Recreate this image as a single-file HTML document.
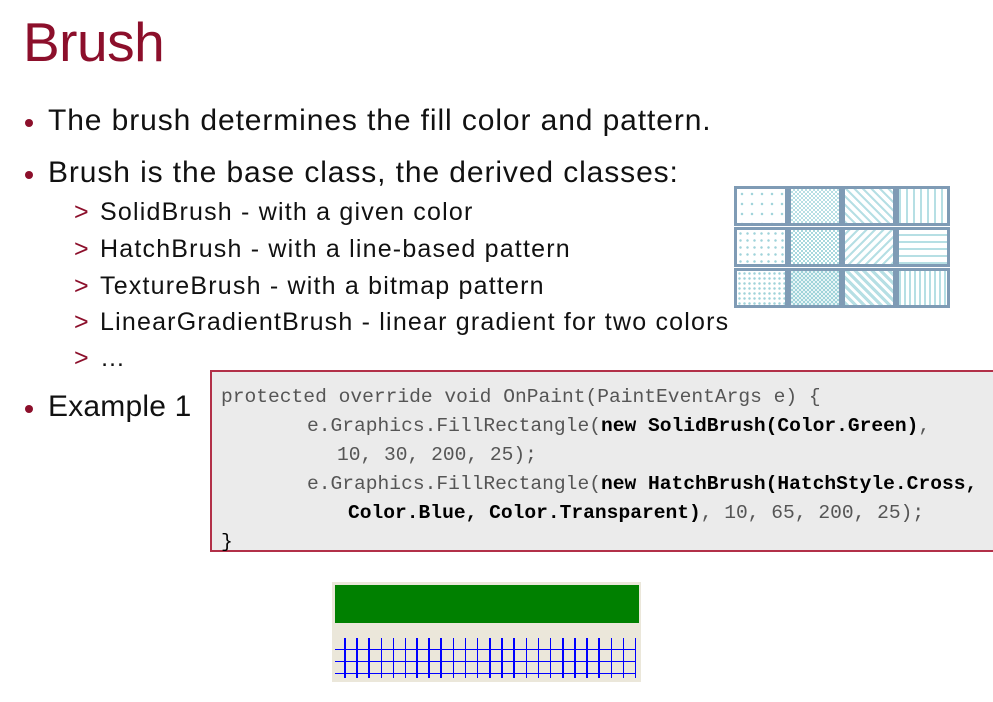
<!DOCTYPE html>
<html><head><style>
body{margin:0;width:993px;height:702px;background:#fff;position:relative;overflow:hidden;font-family:"Liberation Sans",sans-serif;}
.a{position:absolute;white-space:nowrap;}
h1{position:absolute;left:23px;top:10px;margin:0;font-weight:normal;font-size:55px;color:#8c0f2b;letter-spacing:-0.5px}
.b{font-size:30px;color:#111;letter-spacing:0.9px}
.s{font-size:25px;color:#111;letter-spacing:1.2px}
.dot{position:absolute;width:8px;height:8px;border-radius:50%;background:#8c0f2b}
.arr{color:#8c0f2b;position:absolute;left:-26px;letter-spacing:0}
.code{position:absolute;left:210px;top:370px;width:800px;height:178px;background:#ebebeb;border:2px solid #b23048;}
.c{position:absolute;font-family:"Liberation Mono",monospace;font-size:19.6px;color:#555;white-space:pre;}
.c b{color:#000}
.grid{position:absolute;left:734px;top:186px;width:216px;height:126px;}
.cell{position:absolute;width:48px;height:34px;border:3px solid #7f9bb5;background-color:#fff}
.v{position:absolute;top:56px;height:40px;width:1px;background:#0000ff}
.v.t{width:2px}
.h{position:absolute;left:3px;width:301px;height:1px;background:#0000ff}
</style></head><body>
<h1>Brush</h1>
<div class="dot" style="left:25px;top:119px"></div>
<div class="a b" style="left:48px;top:104px">The brush determines the fill color and pattern.</div>
<div class="dot" style="left:25px;top:171px"></div>
<div class="a b" style="left:48px;top:156px">Brush is the base class, the derived classes:</div>
<div class="a s" style="left:100px;top:198px"><span class="arr">&gt;</span>SolidBrush - with a given color</div>
<div class="a s" style="left:100px;top:235px"><span class="arr">&gt;</span>HatchBrush - with a line-based pattern</div>
<div class="a s" style="left:100px;top:272px"><span class="arr">&gt;</span>TextureBrush - with a bitmap pattern</div>
<div class="a s" style="left:100px;top:308px"><span class="arr">&gt;</span>LinearGradientBrush - linear gradient for two colors</div>
<div class="a s" style="left:100px;top:344px"><span class="arr">&gt;</span>…</div>
<div class="dot" style="left:25px;top:405px"></div>
<div class="a b" style="left:48px;top:390px;letter-spacing:0.2px">Example 1</div>

<div class="grid">
<div class="cell" style="left:0;top:0;background-image:radial-gradient(#9fd3da 1px,transparent 1.5px);background-size:10px 10px"></div>
<div class="cell" style="left:54px;top:0;background-image:repeating-conic-gradient(#b6dfe4 0 25%,#fff 0 50%);background-size:4px 4px"></div>
<div class="cell" style="left:108px;top:0;background-image:repeating-linear-gradient(45deg,#b6dfe4 0 2px,#fff 2px 6px)"></div>
<div class="cell" style="left:162px;top:0;background-image:repeating-linear-gradient(90deg,#b6dfe4 0 2px,#fff 2px 7px)"></div>
<div class="cell" style="left:0;top:41px;background-image:radial-gradient(#9fd3da 1px,transparent 1.5px);background-size:7px 7px"></div>
<div class="cell" style="left:54px;top:41px;background-image:repeating-conic-gradient(#a8d8de 0 25%,#fff 0 50%);background-size:4px 4px"></div>
<div class="cell" style="left:108px;top:41px;background-image:repeating-linear-gradient(-45deg,#b6dfe4 0 2px,#fff 2px 6px)"></div>
<div class="cell" style="left:162px;top:41px;background-image:repeating-linear-gradient(0deg,#b6dfe4 0 2px,#fff 2px 7px)"></div>
<div class="cell" style="left:0;top:82px;background-image:radial-gradient(#9fd3da 1px,transparent 1.5px);background-size:5px 5px"></div>
<div class="cell" style="left:54px;top:82px;background-image:repeating-conic-gradient(#9fd3da 0 25%,#e6f4f6 0 50%);background-size:4px 4px"></div>
<div class="cell" style="left:108px;top:82px;background-image:repeating-linear-gradient(45deg,#b6dfe4 0 3px,#fff 3px 6px)"></div>
<div class="cell" style="left:162px;top:82px;background-image:repeating-linear-gradient(90deg,#b6dfe4 0 2px,#fff 2px 5px)"></div>
</div>

<div class="code">
<div class="c" style="left:9px;top:14px">protected override void OnPaint(PaintEventArgs e) {</div>
<div class="c" style="left:95px;top:43px">e.Graphics.FillRectangle(<b>new SolidBrush(Color.Green)</b>,</div>
<div class="c" style="left:125px;top:72px">10, 30, 200, 25);</div>
<div class="c" style="left:95px;top:101px">e.Graphics.FillRectangle(<b>new HatchBrush(HatchStyle.Cross,</b></div>
<div class="c" style="left:136px;top:130px"><b>Color.Blue, Color.Transparent)</b>, 10, 65, 200, 25);</div>
<div class="c" style="left:9px;top:159px;color:#000">}</div>
</div>

<div style="position:absolute;left:332px;top:582px;width:309px;height:100px;background:#ebe7da">
<div style="position:absolute;left:3px;top:3px;width:304px;height:38px;background:#008000"></div>
<div class="h" style="top:67px"></div><div class="h" style="top:79px"></div><div class="h" style="top:91px"></div>
<div class="v t" style="left:12px"></div><div class="v t" style="left:24px"></div><div class="v t" style="left:36px"></div>
<div class="v" style="left:49px"></div><div class="v" style="left:61px"></div><div class="v" style="left:73px"></div>
<div class="v t" style="left:84px"></div><div class="v t" style="left:96px"></div><div class="v t" style="left:108px"></div>
<div class="v" style="left:121px"></div><div class="v" style="left:133px"></div><div class="v" style="left:145px"></div>
<div class="v t" style="left:157px"></div><div class="v t" style="left:169px"></div><div class="v t" style="left:181px"></div>
<div class="v" style="left:194px"></div><div class="v" style="left:206px"></div><div class="v" style="left:218px"></div>
<div class="v t" style="left:230px"></div><div class="v t" style="left:242px"></div><div class="v t" style="left:254px"></div><div class="v t" style="left:266px"></div>
<div class="v" style="left:279px"></div><div class="v" style="left:291px"></div><div class="v" style="left:303px"></div>
</div>
</body></html>
